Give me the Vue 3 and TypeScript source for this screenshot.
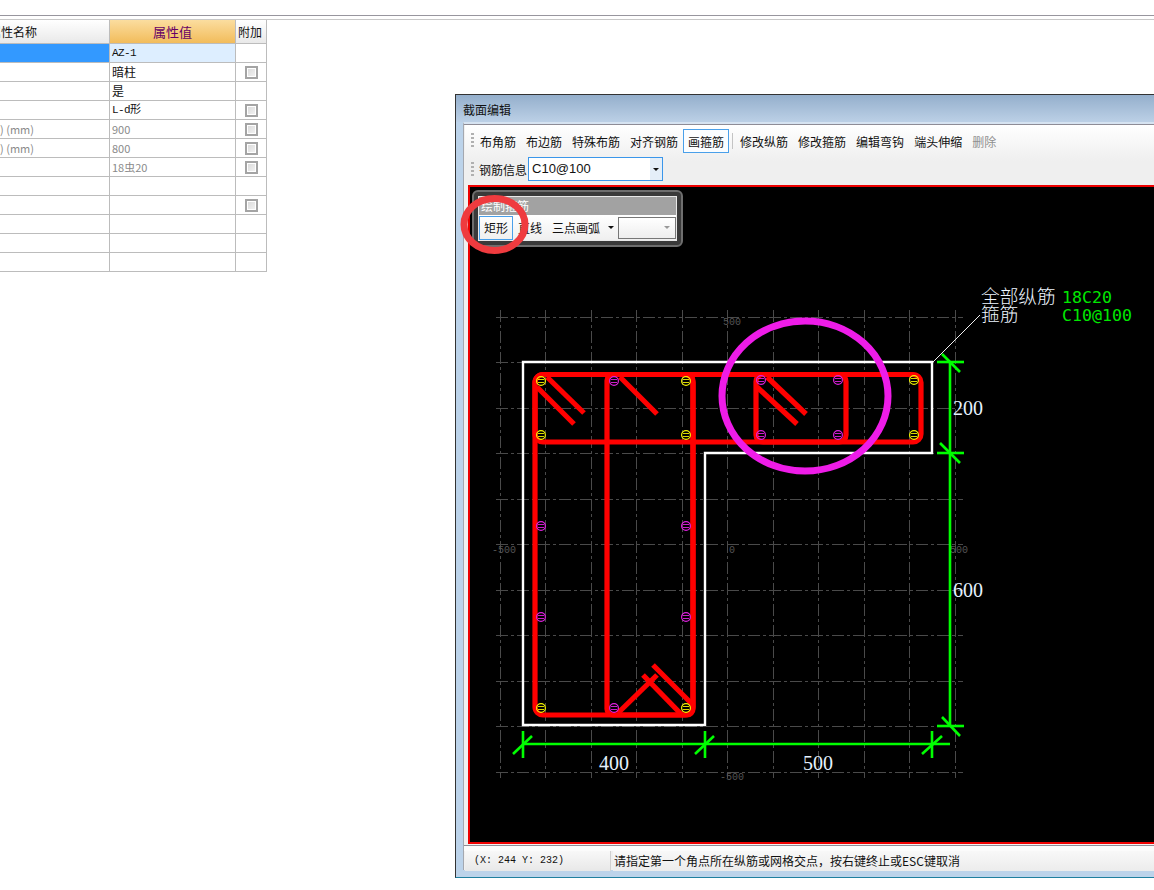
<script setup lang="ts">
interface Row {
  name?: string;
  value?: string;
  muted?: boolean;
  mono?: boolean;
  check?: boolean;
}

const rows: Row[] = [
  { value: 'AZ-1', mono: true },
  { value: '暗柱', check: true },
  { value: '是' },
  { value: 'L-d形', mono: true, check: true },
  { name: ') (mm)', value: '900', muted: true, check: true },
  { name: ') (mm)', value: '800', muted: true, check: true },
  { value: '18虫20', muted: true, check: true },
  {},
  { check: true },
  {},
  {},
  {},
];

const toolsA = ['布角筋', '布边筋', '特殊布筋', '对齐钢筋'];
const toolsB = ['修改纵筋', '修改箍筋', '编辑弯钩', '端头伸缩'];

// grid of the section drawing, 10 cells of 45.5px
const gridX = Array.from({ length: 11 }, (_, i) => 500 + i * 45.5);
const gridY = Array.from({ length: 11 }, (_, i) => 317 + i * 45.5);

const hooks = [
  'M547 377L584 413',
  'M537 387L574 424',
  'M620 377L657 414',
  'M767 377L806 414',
  'M757 387L797 424',
  'M618 713L657 675',
  'M643 675L682 715',
  'M653 665L693 705',
];

const yellow = '#f4f400';
const pink = '#e020e0';
const bars = [
  { x: 541, y: 381, c: yellow },
  { x: 541, y: 435, c: yellow },
  { x: 614, y: 381, c: pink },
  { x: 686, y: 381, c: yellow },
  { x: 686, y: 435, c: yellow },
  { x: 761, y: 380, c: pink },
  { x: 838, y: 380, c: pink },
  { x: 761, y: 435, c: pink },
  { x: 838, y: 435, c: pink },
  { x: 914, y: 380, c: yellow },
  { x: 914, y: 435, c: yellow },
  { x: 541, y: 526, c: pink },
  { x: 541, y: 617, c: pink },
  { x: 686, y: 526, c: pink },
  { x: 686, y: 617, c: pink },
  { x: 541, y: 708, c: yellow },
  { x: 614, y: 708, c: pink },
  { x: 686, y: 708, c: yellow },
];

const dims = [
  'M950 362V727',
  'M523 744H950',
  'M937 362H964',
  'M937 453H964',
  'M937 726H964',
  'M942 354L960 372',
  'M940 443L960 463',
  'M942 717L960 736',
  'M523 731V758',
  'M705 731V758',
  'M932 731V758',
  'M513 754L532 736',
  'M695 754L714 736',
  'M922 754L942 736',
];
</script>

<template>
  <div class="page">
    <div class="rules"></div>
    <div class="main">
      <table class="props">
        <thead>
          <tr>
            <th class="name-head"><span>属性名称</span></th>
            <th class="value-head">属性值</th>
            <th class="extra-head">附加</th>
          </tr>
        </thead>
        <tbody>
          <tr v-for="(row, i) in rows" :key="i">
            <td class="name" :class="{ picked: i === 0, muted: row.muted }">{{ row.name }}</td>
            <td class="value" :class="{ picked: i === 0, muted: row.muted, mono: row.mono }">{{ row.value }}</td>
            <td class="extra"><i v-if="row.check" class="check"></i></td>
          </tr>
        </tbody>
      </table>

      <section class="win">
        <header class="win-title">截面编辑</header>
        <div class="client">
          <div class="toolbar">
            <div class="tool-row first">
              <i class="grip"></i>
              <span v-for="t in toolsA" :key="t" class="tool">{{ t }}</span>
              <span class="tool on">画箍筋</span>
              <i class="sep"></i>
              <span v-for="t in toolsB" :key="t" class="tool">{{ t }}</span>
              <span class="tool off">删除</span>
            </div>
            <div class="tool-row">
              <i class="grip"></i>
              <span class="field-label">钢筋信息</span>
              <div class="combo">
                <span class="combo-text">C10@100</span>
                <span class="combo-arrow"><i class="caret"></i></span>
              </div>
            </div>
          </div>

          <div class="canvas">
            <svg class="drawing" width="700" height="660" viewBox="470 187 700 660">
              <g class="grid">
                <path v-for="x in gridX" :key="x" :d="`M${x} 310V778`" />
                <path v-for="y in gridY" :key="y" :d="`M496 ${y}H963`" />
              </g>
              <g class="grid-label">
                <text x="723" y="325">500</text>
                <text x="492" y="553">-500</text>
                <text x="729" y="553">0</text>
                <text x="950" y="553">500</text>
                <text x="720" y="780">-500</text>
              </g>
              <path class="outline" d="M523 362H932V453H705V725H523Z" />
              <path class="leader" d="M933 362L980 315" />
              <g class="rebar">
                <rect x="535" y="374.5" width="386" height="67.5" rx="8" />
                <rect x="535" y="374.5" width="158" height="340.5" rx="8" />
                <rect x="607" y="374.5" width="86" height="340.5" rx="6" />
                <rect x="756" y="374.5" width="90" height="67.5" rx="7" />
                <path v-for="h in hooks" :key="h" :d="h" />
              </g>
              <g v-for="b in bars" :key="`${b.x}-${b.y}`" class="bar" :stroke="b.c">
                <circle :cx="b.x" :cy="b.y" r="4.4" />
                <path :d="`M${b.x - 3} ${b.y - 1.5}h6M${b.x - 3} ${b.y + 1.5}h6`" />
              </g>
              <g class="dim">
                <path v-for="d in dims" :key="d" :d="d" />
              </g>
              <g class="dim-text">
                <text x="953" y="415">200</text>
                <text x="953" y="597">600</text>
                <text x="599" y="770">400</text>
                <text x="803" y="770">500</text>
              </g>
              <g class="note">
                <text x="981" y="303">全部纵筋</text>
                <text x="981" y="321">箍筋</text>
              </g>
              <g class="note-green">
                <text x="1062" y="303">18C20</text>
                <text x="1062" y="321">C10@100</text>
              </g>
            </svg>

            <div class="panel">
              <div class="panel-inner">
                <div class="panel-title">绘制箍筋</div>
                <div class="panel-row">
                  <span class="ptool on">矩形</span>
                  <span class="ptool">直线</span>
                  <span class="ptool arc">三点画弧</span>
                  <i class="caret"></i>
                  <span class="pcombo"><i class="caret grey"></i></span>
                </div>
              </div>
            </div>
          </div>

          <div class="divider"></div>
          <footer class="status">
            <span class="coords">(X: 244 Y: 232)</span>
            <span class="hint">请指定第一个角点所在纵筋或网格交点，按右键终止或ESC键取消</span>
          </footer>
        </div>
      </section>
    </div>

    <!-- hand-drawn marks on top of the screenshot -->
    <svg class="marks" width="1154" height="890" viewBox="0 0 1154 890">
      <ellipse cx="494.5" cy="224.5" rx="30.5" ry="26" stroke="#ef3b3f" stroke-width="7" />
      <ellipse cx="805" cy="396" rx="83" ry="75" stroke="#ee1ce8" stroke-width="7" />
    </svg>
  </div>
</template>

<style scoped>
.page {
  position: relative;
  width: 1154px;
  height: 890px;
  overflow: hidden;
  background: #fff;
  font-family: "Noto Sans CJK SC", "Liberation Sans", sans-serif;
  font-size: 12px;
  color: #111;
}

.rules {
  height: 15px;
  border-bottom: 1px solid #98969e;
}

.main {
  display: flex;
  align-items: flex-start;
  margin-top: 3px;
  border-top: 1px solid #c8c8c8;
}

/* property table */
.props {
  flex: none;
  width: 267px;
  table-layout: fixed;
  border-collapse: separate;
  border-spacing: 0;
}

.props th,
.props td {
  padding: 0;
  border-right: 1px solid #bcbcbc;
  border-bottom: 1px solid #bcbcbc;
  font-weight: 400;
  line-height: 18px;
  white-space: nowrap;
  overflow: hidden;
}

.props th {
  height: 23px;
  font-size: 12px;
  text-align: left;
  background: linear-gradient(#fff, #e9e9e9);
}

.props td {
  height: 18px;
}

.name-head {
  width: 109px;
}

.name-head span {
  margin-left: -11px;
}

.props .value-head {
  width: 125px;
  font-size: 13px;
  text-align: center;
  color: #660066;
  background: linear-gradient(#fbdd9f, #f2bc5b);
}

.props .extra-head {
  width: 28px;
  padding-left: 2px;
}

.props td.picked {
  background: #ddeeff;
}

.props td.name.picked {
  background: #3399ff;
}

.name {
  font-size: 11px;
}

.value {
  padding-left: 2px !important;
}

.mono {
  font-family: "Liberation Mono", "Noto Sans CJK SC", monospace;
  font-size: 11px;
  letter-spacing: -0.6px;
}

.muted {
  color: #8a8a8a;
  font-size: 11px;
}

.extra {
  text-align: center;
}

.check {
  display: block;
  width: 9px;
  height: 9px;
  margin: 1px auto 0 9px;
  border: 2px solid #a4a4a4;
  background: linear-gradient(135deg, #d8d8d8, #f4f4f4);
  box-shadow: inset 0 0 0 1px #fff;
}

/* window */
.win {
  flex: none;
  display: flex;
  flex-direction: column;
  width: 720px;
  height: 784px;
  margin: 74px 0 0 188px;
  box-sizing: border-box;
  border: 1px solid #333;
  border-bottom-color: #1f7f9f;
  background: #bcd3ea;
}

.win-title {
  flex: none;
  height: 27px;
  padding-left: 7px;
  line-height: 29px;
  background: linear-gradient(#94afcc, #bcd0e6);
}

.client {
  flex: none;
  display: flex;
  flex-direction: column;
  height: 748px;
  margin-left: 7px;
  padding-left: 1px;
  box-sizing: border-box;
  border-top: 2px solid #d6e3f1;
  border-left: 1px solid #a4a8b0;
  background: #f0f0f0;
  box-shadow: inset 0 1px 0 #8e8c96;
}

.toolbar {
  flex: none;
  height: 60px;
  margin-top: 1px;
  background: linear-gradient(#fff, #efefef 60%);
}

.tool-row {
  display: flex;
  align-items: center;
  height: 30px;
  padding-left: 6px;
}

.tool-row.first {
  padding-top: 2px;
  box-sizing: border-box;
}

.grip {
  flex: none;
  width: 3px;
  height: 16px;
  margin-right: 1px;
  background: repeating-linear-gradient(#b0b0b0 0 2px, transparent 2px 4px);
}

.tool {
  flex: none;
  height: 22px;
  padding: 0 4px;
  border: 1px solid transparent;
  line-height: 23px;
}

.tool.on {
  border-color: #4aa0ea;
  background: #fbfdff;
}

.tool.off {
  color: #8f8f8f;
}

.sep {
  flex: none;
  width: 1px;
  height: 16px;
  margin: 0 2px 0 3px;
  background: #c4c4c4;
}

.field-label {
  margin: 0 0 2px 4px;
}

.combo {
  display: flex;
  justify-content: space-between;
  width: 135px;
  height: 24px;
  margin: 0 0 2px 1px;
  box-sizing: border-box;
  border: 1px solid #3a96ea;
  background: #fff;
}

.combo-text {
  padding-left: 3px;
  font-family: "Liberation Sans", sans-serif;
  font-size: 13px;
  line-height: 22px;
}

.combo-arrow {
  display: flex;
  align-items: center;
  justify-content: center;
  width: 12px;
  background: #e4eef8;
}

.caret {
  flex: none;
  width: 0;
  height: 0;
  border: 3px solid transparent;
  border-top: 3px solid #111;
  border-bottom: 0;
}

.caret.grey {
  border-top-color: #999;
}

.canvas {
  position: relative;
  flex: none;
  height: 659px;
  margin-left: 3px;
  box-sizing: border-box;
  border: 2px solid #ee0000;
  background: #000;
  overflow: hidden;
}

.drawing {
  display: block;
}

.grid path {
  fill: none;
  stroke: #4a4a4a;
  stroke-dasharray: 12 3 3 3;
  shape-rendering: crispEdges;
}

.grid-label text {
  font-family: "Liberation Mono", monospace;
  font-size: 10px;
  fill: #555;
}

.outline {
  fill: none;
  stroke: #fff;
  stroke-width: 2.4;
}

.leader {
  fill: none;
  stroke: #f0f0f0;
  stroke-width: 1;
}

.rebar rect,
.rebar path {
  fill: none;
  stroke: #ff0000;
  stroke-width: 5.2;
}

.bar circle {
  fill: none;
  stroke-width: 1.2;
}

.bar path {
  fill: none;
  stroke-width: 0.9;
}

.dim path {
  fill: none;
  stroke: #00ff00;
  stroke-width: 2.6;
}

.dim-text text {
  font-family: "Liberation Serif", serif;
  font-size: 20px;
  fill: #e4f2ff;
}

.note text {
  font-family: "Noto Sans CJK SC", sans-serif;
  font-size: 18.7px;
  font-weight: 300;
  fill: #eef6ff;
}

.note-green text {
  font-family: "DejaVu Sans Mono", monospace;
  font-size: 16.6px;
  fill: #00e800;
}

.panel {
  position: absolute;
  left: 2px;
  top: 3px;
  width: 211px;
  height: 57px;
  padding: 4px;
  box-sizing: border-box;
  border: 2px solid #6e6e6e;
  border-radius: 6px;
  background: #3a3a3a;
}

.panel-inner {
  height: 100%;
  box-sizing: border-box;
  border: 1px solid #e8e8e8;
  background: #fff;
}

.panel-title {
  height: 18px;
  padding-left: 2px;
  line-height: 18px;
  color: #fff;
  background: #a2a2a2;
}

.panel-row {
  display: flex;
  align-items: center;
  height: 25px;
  background: linear-gradient(#fff, #efefef);
}

.ptool {
  flex: none;
  height: 22px;
  margin-left: 1px;
  padding: 0 3px;
  border: 1px solid transparent;
  line-height: 22px;
  white-space: nowrap;
}

.ptool.on {
  margin-left: 0;
  padding: 0 4px;
  border-color: #4aa0ea;
}

.ptool.arc {
  margin: 0 4px 0 2px;
}

.pcombo {
  flex: none;
  display: flex;
  align-items: center;
  justify-content: flex-end;
  width: 58px;
  height: 22px;
  margin-left: 4px;
  padding-right: 5px;
  box-sizing: border-box;
  border: 1px solid #777;
  background: linear-gradient(#fff, #eee);
}

.divider {
  flex: none;
  height: 5px;
  margin: 1px 0 0 -1px;
  border-top: 1px solid #8e8c96;
  background: #fbfbfb;
}

.status {
  flex: 1;
  display: flex;
  gap: 2px;
  line-height: 20px;
}

.coords {
  flex: none;
  width: 136px;
  padding-left: 9px;
  font-family: "Liberation Mono", monospace;
  font-size: 10px;
  background: linear-gradient(#f8f8f8, #e8e8e8);
  border-right: 1px solid #d0d0d0;
}

.hint {
  flex: 1;
  padding-left: 1px;
  white-space: nowrap;
  background: linear-gradient(#f8f8f8, #ececec);
}

.marks {
  position: absolute;
  left: 0;
  top: 0;
  fill: none;
  pointer-events: none;
}
</style>
